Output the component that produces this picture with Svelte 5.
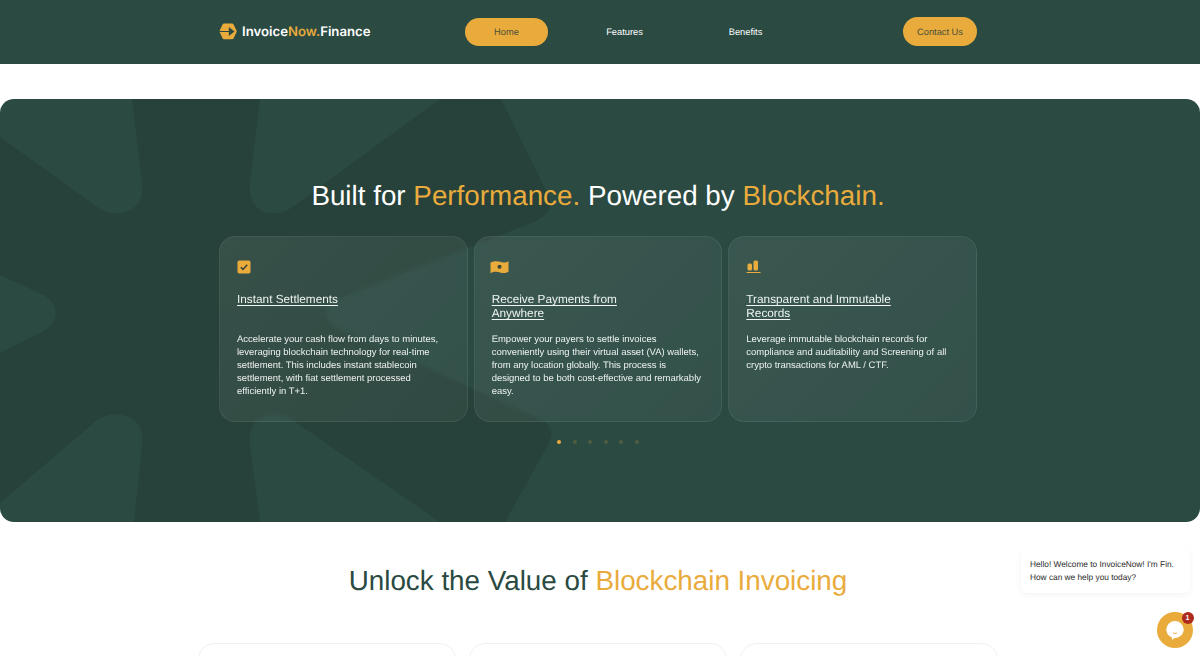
<script>
  const features = [
    { icon: 'check', title: 'Instant Settlements', body: 'Accelerate your cash flow from days to minutes, leveraging blockchain technology for real-time settlement. This includes instant stablecoin settlement, with fiat settlement processed efficiently in T+1.' },
    { icon: 'money', title: 'Receive Payments from Anywhere', body: 'Empower your payers to settle invoices conveniently using their virtual asset (VA) wallets, from any location globally. This process is designed to be both cost-effective and remarkably easy.' },
    { icon: 'bars', title: 'Transparent and Immutable Records', body: 'Leverage immutable blockchain records for compliance and auditability and Screening of all crypto transactions for AML / CTF.' }
  ];
  const dots = [0, 1, 2, 3, 4, 5];
</script>

<div class="page">
  <header class="topbar">
    <a class="brand" href="#top">
      <svg class="brand-mark" viewBox="0 0 18 17" aria-hidden="true">
        <path d="M5 .6h8.200c.6 0 1 .2 1.300.7l3 6.200c.3.6.3 1.200 0 1.800l-3 6.200c-.3.5-.7.8-1.300.8H5c-.6 0-1-.3-1.300-.8l-3-6.200c-.3-.6-.3-1.200 0-1.800l3-6.200C4 .8 4.400.6 5 .6z" fill="#e9ab3c"/>
        <path d="M0 7.900h9.800V3.900L15.500 8.500l-5.700 4.600V9H0z" fill="#2a4a42"/>
      </svg>
      <span class="brand-text">Invoice<em>Now.</em>Finance</span>
    </a>
    <nav class="nav">
      <a class="nav-link active" href="#home">Home</a>
      <a class="nav-link wide" href="#features">Features</a>
      <a class="nav-link" href="#benefits">Benefits</a>
    </nav>
    <a class="contact" href="#contact">Contact Us</a>
  </header>

  <section class="hero">
    <svg class="hero-bg" viewBox="0 0 1200 423" preserveAspectRatio="none" aria-hidden="true">
      <path fill="#27423a" d="M132 0 L142 84 Q145 106 126 113 Q110 118 96 107 L0 38 L0 176 L44 196 Q56 204 56 214 Q56 225 44 232 L0 254 L0 404 L96 322 Q110 312 126 317 Q145 324 142 346 L134 423 L260 423 L250 346 Q248 324 264 317 Q280 312 294 322 L440 423 L505 423 L550 342 Q556 328 540 320 L336 228 Q326 222 326 214 Q326 206 336 201 L536 122 Q556 112 548 96 L501 0 L440 0 L294 107 Q280 118 264 113 Q248 106 250 84 L260 0 Z"/>
    </svg>
    <div class="hero-inner">
      <h1>Built for <span>Performance.</span> Powered by <span>Blockchain.</span></h1>
      <div class="cards">
        {#each features as f}
          <article class="card">
            <div class="card-icon">
              {#if f.icon === 'check'}
                <svg width="14" height="14" viewBox="0 0 14 14" aria-hidden="true">
                  <rect x="0.500" y="0.500" width="13" height="13" rx="1.800" fill="#e9ab3c"/>
                  <path d="M3.800 7.200l2.200 2.200 4.200-4.600" fill="none" stroke="#33423a" stroke-width="1.500"/>
                </svg>
              {:else if f.icon === 'money'}
                <svg class="money" width="19" height="14" viewBox="0 0 19 14" aria-hidden="true">
                  <path d="M.5 2.600C4 .8 7 1 10 1.800s5.500 1 8.500-.6v10.600c-3 1.600-5.500 1.400-8.500.6s-6-1-9.500.8z" fill="#e9ab3c"/>
                  <circle cx="9.500" cy="6.800" r="2.100" fill="#3f4a38"/>
                </svg>
              {:else}
                <svg width="15" height="14" viewBox="0 0 15 14" aria-hidden="true">
                  <rect x="1.500" y="3.500" width="4.500" height="7" rx="1.500" fill="#e9ab3c"/>
                  <rect x="7.500" y="0.500" width="4.500" height="10" rx="1.500" fill="#e9ab3c"/>
                  <rect x="0.500" y="12" width="14" height="1" fill="#e9ab3c"/>
                </svg>
              {/if}
            </div>
            <h3>{f.title}</h3>
            <p>{f.body}</p>
          </article>
        {/each}
      </div>
      <div class="dots">
        {#each dots as d}
          <span class="dot" class:on={d === 0}></span>
        {/each}
      </div>
    </div>
  </section>

  <section class="value">
    <h2>Unlock the Value of <span>Blockchain Invoicing</span></h2>
    <div class="value-cards">
      <div class="value-card"></div>
      <div class="value-card"></div>
      <div class="value-card"></div>
    </div>
  </section>

  <aside class="chat-bubble">Hello! Welcome to InvoiceNow! I'm Fin.<br />How can we help you today?</aside>
  <button class="launcher" aria-label="Open chat">
    <svg width="36" height="36" viewBox="0 0 36 36" aria-hidden="true">
      <circle cx="18" cy="18" r="18" fill="#e9ab3c"/>
      <path d="M18 9a8.700 8.700 0 0 1 8.700 8.500c0 4.800-3.900 8.500-8.700 8.500-1 0-1.500.9-2.300 1.500-.5.300-.8.200-.8-.4v-1.700C11.700 24.200 9.300 21.200 9.300 17.500A8.700 8.700 0 0 1 18 9z" fill="#fff"/>
      <path d="M16 21q2 1 4 0" stroke="#e9ab3c" stroke-width="1" fill="none"/>
    </svg>
    <span class="badge">1</span>
  </button>
</div>

<style>
  :global(body) {
    margin: 0;
    background: #fff;
  }
  .page {
    position: relative;
    height: 656px;
    overflow: hidden;
    font-family: "Liberation Sans", Arial, sans-serif;
    text-rendering: geometricPrecision;
    background: #fff;
  }
  a {
    text-decoration: none;
  }
  .topbar {
    height: 64px;
    background: #2a4a42;
    box-sizing: border-box;
    padding: 0 223px 1px 219px;
    display: flex;
    align-items: center;
  }
  .brand {
    display: flex;
    align-items: center;
    gap: 5px;
    width: 246px;
  }
  .brand-mark {
    width: 18px;
    height: 17px;
    display: block;
  }
  .brand-text {
    font-family: Inter, sans-serif;
    font-weight: 600;
    font-size: 13.200px;
    color: #fff;
  }
  .brand-text em {
    font-style: normal;
    color: #e9ab3c;
  }
  .nav {
    display: flex;
    align-items: center;
    flex: 1;
  }
  .nav-link {
    width: 83px;
    height: 28px;
    margin-right: 35px;
    border-radius: 14px;
    display: flex;
    align-items: center;
    justify-content: center;
    font-size: 9.300px;
    color: #fff;
  }
  .nav-link.wide {
    margin-right: 38px;
  }
  .nav-link.active {
    background: #e9ab3c;
    color: #4b5038;
  }
  .contact {
    width: 74px;
    height: 29px;
    border-radius: 15px;
    background: #e9ab3c;
    color: #4b5038;
    display: flex;
    align-items: center;
    justify-content: center;
    font-size: 9.300px;
  }
  .hero {
    position: relative;
    margin-top: 35px;
    height: 423px;
    border-radius: 14px;
    overflow: hidden;
    background: #2a4a42;
  }
  .hero-bg {
    position: absolute;
    inset: 0;
    width: 100%;
    height: 100%;
  }
  .hero-inner {
    position: relative;
    box-sizing: border-box;
    padding: 79px 223px 0 219px;
  }
  h1 {
    margin: 0;
    height: 58px;
    font-size: 27.800px;
    line-height: 36px;
    font-weight: 400;
    color: #fff;
    text-align: center;
  }
  h1 span,
  h2 span {
    color: #e9ab3c;
  }
  .cards {
    display: grid;
    grid-template-columns: repeat(3, 1fr);
    gap: 6px;
  }
  .card {
    box-sizing: border-box;
    height: 186px;
    padding: 23px 17px;
    border-radius: 16px;
    border: 1px solid rgba(255, 255, 255, 0.07);
    background: linear-gradient(135deg, rgba(255, 255, 255, 0.075), rgba(255, 255, 255, 0.045));
    backdrop-filter: blur(2px);
  }
  .card-icon {
    height: 14px;
    display: flex;
  }
  .money {
    margin-left: -2px;
  }
  h3 {
    margin: 18px 0 12px;
    max-width: 170px;
    min-height: 29px;
    font-size: 11.800px;
    line-height: 14.200px;
    font-weight: 400;
    color: #f0f4f2;
    text-decoration: underline;
    text-underline-offset: 1.500px;
    text-decoration-thickness: 1px;
  }
  .card p {
    margin: 0;
    font-size: 9.470px;
    line-height: 13px;
    color: #eef2f0;
  }
  .dots {
    display: flex;
    justify-content: center;
    gap: 11.500px;
    margin-top: 18px;
    margin-left: -78px;
    margin-right: -78px;
  }
  .dot {
    width: 4px;
    height: 4px;
    border-radius: 50%;
    background: rgba(233, 171, 60, 0.2);
  }
  .dot.on {
    background: #e9ab3c;
  }
  .value {
    box-sizing: border-box;
    padding: 40px 202px 0 198px;
  }
  h2 {
    margin: 0;
    font-size: 27.800px;
    line-height: 38px;
    font-weight: 400;
    color: #2a4a42;
    text-align: center;
    height: 81px;
  }
  .value-cards {
    display: grid;
    grid-template-columns: repeat(3, 258px);
    gap: 13px;
  }
  .value-card {
    height: 120px;
    box-sizing: border-box;
    border: 1px solid #f1f1f1;
    border-radius: 16px;
  }
  .chat-bubble {
    position: absolute;
    left: 1021px;
    top: 548px;
    width: 169px;
    height: 45px;
    box-sizing: border-box;
    padding: 10px 0 0 9px;
    background: #fff;
    border-radius: 6px;
    box-shadow: 0 2px 6px rgba(0, 0, 0, 0.05);
    font-size: 8.300px;
    line-height: 13px;
    color: #2b2b2b;
    white-space: nowrap;
  }
  .launcher {
    position: absolute;
    left: 1157px;
    top: 612px;
    width: 36px;
    height: 36px;
    padding: 0;
    border: 0;
    background: none;
  }
  .launcher svg {
    display: block;
  }
  .badge {
    position: absolute;
    right: -0.500px;
    top: 0;
    width: 12px;
    height: 12px;
    border-radius: 50%;
    background: #ad2a1f;
    color: #fff;
    font-size: 7px;
    font-weight: 700;
    line-height: 12px;
    text-align: center;
  }
</style>
